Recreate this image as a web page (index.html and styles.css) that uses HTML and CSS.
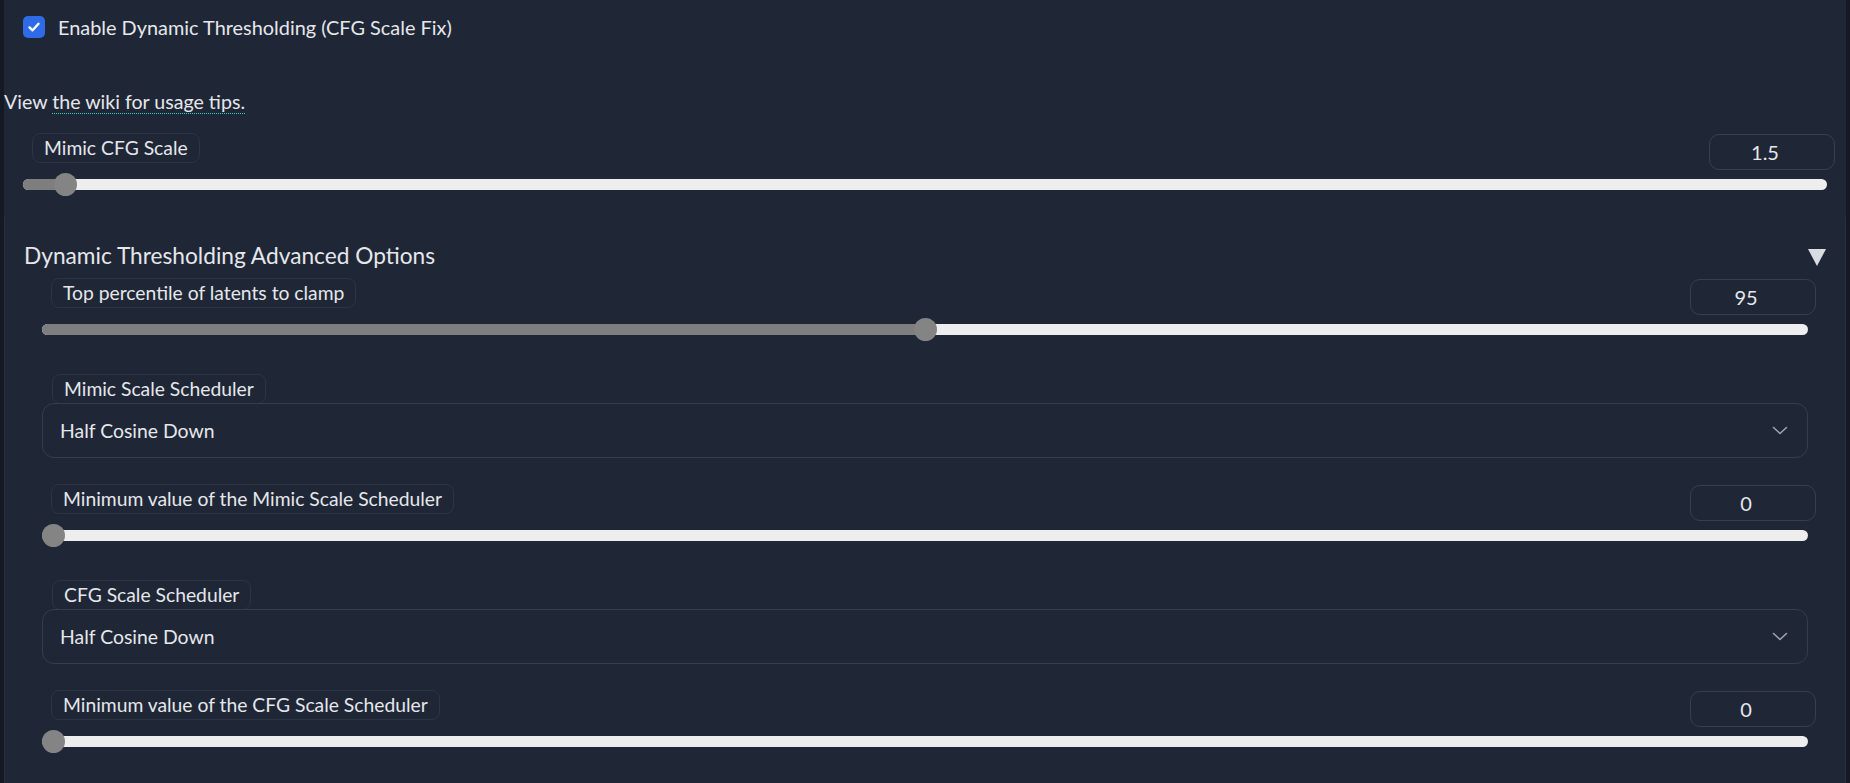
FILE: index.html
```html
<!DOCTYPE html>
<html>
<head>
<meta charset="utf-8">
<link rel="stylesheet" href="styles.css">
</head>
<body>
<div class="panel">
  <label class="check-row">
    <span class="checkbox">
      <svg width="14" height="14" viewBox="0 0 14 14"><path d="M2.5 7.4 L5.6 10.3 L11.5 3.8" fill="none" stroke="#ffffff" stroke-width="2.4" stroke-linecap="round" stroke-linejoin="round"/></svg>
    </span>
    <span class="check-text">Enable Dynamic Thresholding (CFG Scale Fix)</span>
  </label>

  <p class="wiki">View <span class="wiki-link">the wiki for usage tips.</span></p>

  <div class="slider-block">
    <div class="slider-head">
      <span class="field-label">Mimic CFG Scale</span>
      <span class="num">1.5</span>
    </div>
    <div class="track">
      <div class="fill" style="width: calc(1.74% + 11px);"></div>
      <div class="thumb" style="left: calc((100% - 23px) * 0.0174);"></div>
    </div>
  </div>

  <div class="accordion">
    <div class="acc-head">
      <span class="acc-title">Dynamic Thresholding Advanced Options</span>
      <span class="acc-arrow"></span>
    </div>
    <div class="acc-body">
      <div class="slider-block">
        <div class="slider-head">
          <span class="field-label">Top percentile of latents to clamp</span>
          <span class="num">95</span>
        </div>
        <div class="track">
          <div class="fill" style="width: calc((100% - 23px) * 0.5 + 11px);"></div>
          <div class="thumb" style="left: calc((100% - 23px) * 0.5);"></div>
        </div>
      </div>

      <div class="drop-block">
        <span class="field-label">Mimic Scale Scheduler</span>
        <div class="dropdown">
          <span>Half Cosine Down</span>
          <svg class="chev" width="16" height="9" viewBox="0 0 16 9"><path d="M1.5 1.5 L8 7.5 L14.5 1.5" fill="none" stroke="#9ca3af" stroke-width="1.6" stroke-linecap="round" stroke-linejoin="round"/></svg>
        </div>
      </div>

      <div class="slider-block">
        <div class="slider-head">
          <span class="field-label">Minimum value of the Mimic Scale Scheduler</span>
          <span class="num">0</span>
        </div>
        <div class="track">
          <div class="fill" style="width: 11px;"></div>
          <div class="thumb" style="left: 0;"></div>
        </div>
      </div>

      <div class="drop-block">
        <span class="field-label">CFG Scale Scheduler</span>
        <div class="dropdown">
          <span>Half Cosine Down</span>
          <svg class="chev" width="16" height="9" viewBox="0 0 16 9"><path d="M1.5 1.5 L8 7.5 L14.5 1.5" fill="none" stroke="#9ca3af" stroke-width="1.6" stroke-linecap="round" stroke-linejoin="round"/></svg>
        </div>
      </div>

      <div class="slider-block">
        <div class="slider-head">
          <span class="field-label">Minimum value of the CFG Scale Scheduler</span>
          <span class="num">0</span>
        </div>
        <div class="track">
          <div class="fill" style="width: 11px;"></div>
          <div class="thumb" style="left: 0;"></div>
        </div>
      </div>
    </div>
  </div>
</div>
</body>
</html>
```

FILE: styles.css
```css
html, body {
  margin: 0;
  padding: 0;
  background: #141923;
  height: 100%;
  overflow: hidden;
}

body {
  font-family: "Lato", "Noto Sans", sans-serif;
  font-size: 20px;
  color: #e5e7eb;
}

.panel {
  margin: 0 4px;
  background: #1f2636;
  min-height: 783px;
  display: flex;
  flex-direction: column;
}

.check-row {
  display: flex;
  align-items: center;
  gap: 13px;
  padding: 16px 19px 0;
  height: 22px;
}

.checkbox {
  width: 22px;
  height: 22px;
  border-radius: 5px;
  background: #2f6be6;
  display: flex;
  align-items: center;
  justify-content: center;
}

.check-text {
  font-size: 19.9px;
  line-height: 22px;
}

.wiki {
  margin: 52px 0 0;
  font-size: 19.6px;
  line-height: 24px;
  height: 24px;
}

.wiki-link {
  border-bottom: 1px dotted #2dd4bf;
}

.slider-block {
  padding: 0 19px 13px;
  margin-top: 19px;
}

.accordion .slider-block,
.accordion .drop-block {
  margin-top: 0;
}

.slider-head {
  display: flex;
  justify-content: space-between;
  align-items: flex-start;
  height: 37px;
  margin: 0 -8px 0 9px;
}

.field-label {
  display: inline-flex;
  align-items: center;
  height: 30px;
  box-sizing: border-box;
  padding: 0 11px;
  border: 1px solid #2c3546;
  border-radius: 8px;
  font-size: 19.3px;
  line-height: 30px;
  white-space: nowrap;
}

.num {
  margin-top: 1px;
  width: 126px;
  height: 36px;
  box-sizing: border-box;
  border: 1px solid #363f51;
  border-radius: 10px;
  display: flex;
  align-items: center;
  justify-content: center;
  padding-right: 14px;
}

.track {
  position: relative;
  margin-top: 9px;
  height: 11px;
  border-radius: 6px;
  background: #eeeeee;
}

.fill {
  height: 100%;
  border-radius: 6px 0 0 6px;
  background: #7e7e7e;
}

.thumb {
  position: absolute;
  top: -6px;
  width: 23px;
  height: 23px;
  border-radius: 50%;
  background: #848484;
}

.accordion {
  margin-top: 14px;
  flex: 1;
  border-left: 1px solid #283041;
  border-right: 1px solid #283041;
}

.acc-head {
  display: flex;
  justify-content: space-between;
  align-items: center;
  padding: 24px 19px 0;
  height: 30px;
}

.acc-title {
  font-size: 22.7px;
  line-height: 30px;
}

.acc-arrow {
  width: 0;
  height: 0;
  border-left: 9.5px solid transparent;
  border-right: 9.5px solid transparent;
  border-top: 17px solid #d9dce1;
  margin-top: 2px;
}

.acc-body {
  padding: 7px 18px 0;
  display: flex;
  flex-direction: column;
  gap: 26px;
}

.drop-block {
  display: flex;
  flex-direction: column;
  align-items: flex-start;
  padding: 0 19px;
}

.drop-block .field-label {
  margin-left: 10px;
}

.dropdown {
  align-self: stretch;
  margin-top: -1px;
  height: 55px;
  box-sizing: border-box;
  border: 1px solid #343d4f;
  border-radius: 12px;
  display: flex;
  align-items: center;
  justify-content: space-between;
  padding: 0 19px 0 17px;
  font-size: 19.4px;
}

.chev {
  display: block;
}
```
